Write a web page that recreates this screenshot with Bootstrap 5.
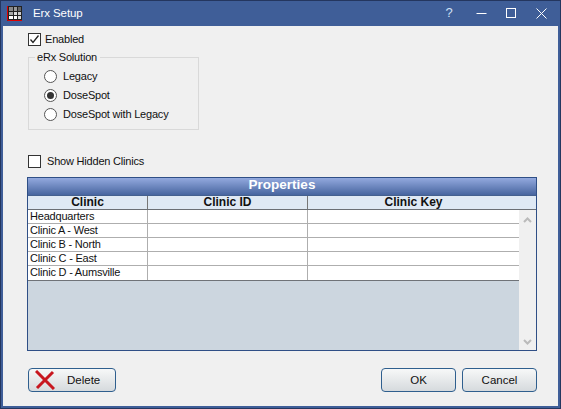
<!DOCTYPE html>
<html lang="en">
<head>
<meta charset="UTF-8">
<title>Erx Setup</title>
<link href="https://cdn.jsdelivr.net/npm/bootstrap@5.3.3/dist/css/bootstrap.min.css" rel="stylesheet">
<style>
html, body { margin: 0; height: 409px; overflow: hidden; }
body { background: #f0f0f0; font-family: "Liberation Sans", Arial, sans-serif; font-size: 11px; letter-spacing: -.2px; line-height: 13px; color: #111; }
.win { width: 561px; height: 409px; background: #f0f0f0; border: 3px solid #3f5e98; border-top: 0; outline: 1px solid #24365f; outline-offset: -1px; }
.titlebar { height: 26px; margin: 0 -3px; background: #3f5e98; color: #fff; font-size: 11.5px; letter-spacing: -.1px; }
.app-ico { margin-left: 7px; margin-right: 11px; }
.title-ctrl { width: 30px; height: 26px; }
.help-ctrl { width: 34px; font-size: 13px; color: #cfe0f5; padding-bottom: 1px; }
.ctrl-set { margin-right: 5px; }
.body-pad { padding: 7px 21px 0 25px; }
.chk { width: 13px; height: 13px; background: #fff; border: 1px solid #333; }
.radio-dot { width: 13px; height: 13px; border-radius: 50%; background: #fff; border: 1px solid #555; }
.radio-dot.on::after { content: ""; width: 7px; height: 7px; border-radius: 50%; background: #333; }
.group-box { width: 171px; height: 73px; margin-top: 11px; border: 1px solid #d9d9d9; padding: 9px 0 0 15px; position: relative; }
.group-title { position: absolute; top: -7px; left: 6px; background: #f0f0f0; padding: 0 3px 0 2px; }
.radio-row { height: 19px; gap: 6px; }
.hidden-row { margin-top: 25px; gap: 6px; }
.grid-wrap { width: 510px; height: 174px; margin-top: 9px; margin-left: -1px; border: 1px solid #2f4f86; background: #ccd6df; letter-spacing: 0; }
.grid-title { height: 18px; background: linear-gradient(#93a9de, #47659f); color: #fff; font-weight: 700; font-size: 13.5px; border-bottom: 1px solid #44608f; }
.grid-head { height: 14px; background: #dfe9f4; border-bottom: 1px solid #6b6f75; font-weight: 700; font-size: 12px; line-height: 13px; }
.grid-main { height: 140px; }
.grid-rows { width: 491px; letter-spacing: -.2px; font-size: 11px; }
.grid-row { height: 14px; background: #fff; border-bottom: 1px solid #aeaeae; }
.grid-row:last-child { height: 15px; border-bottom: 1px solid #6f7378; }
.cell-a { width: 120px; border-right: 1px solid #aeaeae; padding-left: 2px; }
.cell-b { width: 160px; border-right: 1px solid #aeaeae; }
.cell-c { width: 211px; }
.grid-head .cell-a, .grid-head .cell-b { padding: 0; text-align: center; border-right-color: #777; }
.grid-head .cell-c { text-align: center; }
.grid-sb { width: 17px; background: #f0f0f0; padding: 7px 0 5px; }
.foot { margin-top: 17px; width: 509px; }
.win-btn { height: 24px; border: 1px solid #2f5f8e; border-radius: 4px; background: linear-gradient(#f7f8f8, #d6dadd); color: #111; font-size: 11.5px; padding: 0; }
.del-btn { width: 88px; }
.del-ico { margin-left: 6px; margin-right: 12px; }
.ok-btn { width: 75px; }
.cancel-gap { margin-left: 6px; }
</style>
</head>
<body>
<div class="win">
  <div class="titlebar d-flex align-items-center">
    <svg class="app-ico" width="15" height="15" viewBox="0 0 15 15">
      <rect width="15" height="15" fill="#222"/>
      <rect x="2" y="1" width="4" height="4" fill="#888"/><rect x="7" y="1" width="3" height="4" fill="#999"/><rect x="11" y="1" width="3" height="4" fill="#666"/>
      <rect x="2" y="6" width="4" height="3" fill="#aaa"/><rect x="7" y="6" width="3" height="3" fill="#ddd"/><rect x="11" y="6" width="3" height="3" fill="#ccc"/>
      <rect x="2" y="10" width="4" height="3" fill="#fff"/><rect x="7" y="10" width="3" height="3" fill="#fff"/><rect x="11" y="10" width="3" height="3" fill="#ddd"/>
      <path d="M.5 0V14.5H15" fill="none" stroke="#d00"/>
    </svg>
    <span>Erx Setup</span>
    <div class="ctrl-set ms-auto d-flex">
      <div class="title-ctrl help-ctrl d-flex align-items-center justify-content-center">?</div>
      <div class="title-ctrl d-flex align-items-center justify-content-center"><svg width="11" height="11"><path d="M.5 5.5H10.5" stroke="#fff"/></svg></div>
      <div class="title-ctrl d-flex align-items-center justify-content-center"><svg width="11" height="11"><rect x=".5" y=".5" width="9" height="9" fill="none" stroke="#fff"/></svg></div>
      <div class="title-ctrl d-flex align-items-center justify-content-center"><svg width="11" height="11"><path d="M.5 .5L10.5 10.5M10.5 .5L.5 10.5" stroke="#fff"/></svg></div>
    </div>
  </div>
  <div class="body-pad">
    <div class="d-flex align-items-center gap-1">
      <div class="chk d-flex"><svg width="11" height="11" viewBox="0 0 11 11"><path d="M1.5 5.5L4 8.5L9.5 1.5" fill="none" stroke="#222" stroke-width="1.3"/></svg></div>
      <span>Enabled</span>
    </div>
    <div class="group-box">
      <span class="group-title">eRx Solution</span>
      <div class="radio-row d-flex align-items-center"><span class="radio-dot d-flex align-items-center justify-content-center"></span>Legacy</div>
      <div class="radio-row d-flex align-items-center"><span class="radio-dot on d-flex align-items-center justify-content-center"></span>DoseSpot</div>
      <div class="radio-row d-flex align-items-center"><span class="radio-dot d-flex align-items-center justify-content-center"></span>DoseSpot with Legacy</div>
    </div>
    <div class="hidden-row d-flex align-items-center">
      <div class="chk"></div>
      <span>Show Hidden Clinics</span>
    </div>
    <div class="grid-wrap">
      <div class="grid-title text-center">Properties</div>
      <div class="grid-head d-flex">
        <div class="cell-a">Clinic</div><div class="cell-b">Clinic ID</div><div class="cell-c">Clinic Key</div>
      </div>
      <div class="grid-main d-flex">
        <div class="grid-rows">
          <div class="grid-row d-flex"><div class="cell-a">Headquarters</div><div class="cell-b"></div><div class="cell-c"></div></div>
          <div class="grid-row d-flex"><div class="cell-a">Clinic A - West</div><div class="cell-b"></div><div class="cell-c"></div></div>
          <div class="grid-row d-flex"><div class="cell-a">Clinic B - North</div><div class="cell-b"></div><div class="cell-c"></div></div>
          <div class="grid-row d-flex"><div class="cell-a">Clinic C - East</div><div class="cell-b"></div><div class="cell-c"></div></div>
          <div class="grid-row d-flex"><div class="cell-a">Clinic D - Aumsville</div><div class="cell-b"></div><div class="cell-c"></div></div>
        </div>
        <div class="grid-sb d-flex flex-column justify-content-between align-items-center">
          <svg width="9" height="6"><path d="M1 5L4.5 1.5L8 5" fill="none" stroke="#bbb" stroke-width="2"/></svg>
          <svg width="9" height="6"><path d="M1 1L4.5 4.5L8 1" fill="none" stroke="#bbb" stroke-width="2"/></svg>
        </div>
      </div>
    </div>
    <div class="foot d-flex">
      <button class="win-btn del-btn d-flex align-items-center" type="button">
        <svg class="del-ico" width="20" height="20" viewBox="0 0 20 20"><path d="M1 1L19 19M18 2L2 18" stroke="#c8171f" stroke-width="3"/></svg>
        <span>Delete</span>
      </button>
      <button class="win-btn ok-btn ms-auto" type="button">OK</button>
      <button class="win-btn ok-btn cancel-gap" type="button">Cancel</button>
    </div>
  </div>
</div>
<script src="https://cdn.jsdelivr.net/npm/bootstrap@5.3.3/dist/js/bootstrap.bundle.min.js"></script>
</body>
</html>
